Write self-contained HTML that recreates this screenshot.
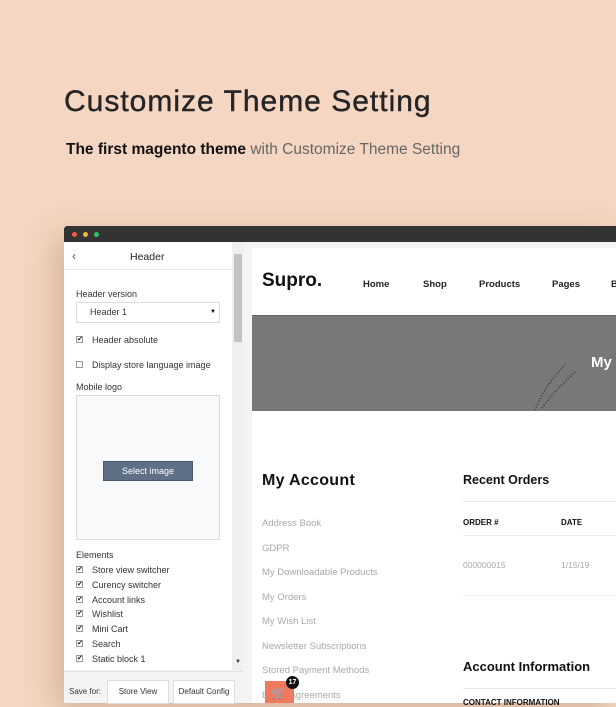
<!DOCTYPE html>
<html><head><meta charset="utf-8"><style>
*{margin:0;padding:0;box-sizing:border-box}
body{width:616px;height:703px;overflow:hidden;background:#f5d6c2;font-family:"Liberation Sans",sans-serif;position:relative}
.a{position:absolute;white-space:nowrap}
.sb{font-size:9px;color:#333}
.cb{position:absolute;width:7px;height:7px;border:1px solid #999;background:#fff;font-size:7px;line-height:5px;text-align:center;color:#222}
.lk{font-size:9.5px;color:#a9a9a9;left:262px}
</style></head><body>
<div class="a" style="left:64px;top:85px;font-size:30px;color:#252525;letter-spacing:1px;-webkit-text-stroke:0.4px #252525">Customize Theme Setting</div>
<div class="a" style="left:66px;top:141px;font-size:15.5px;color:#111"><b>The first magento theme</b> <span style="color:#666">with Customize Theme Setting</span></div>

<div class="a" style="left:64px;top:226px;width:552px;height:477px;background:#f4f4f4;box-shadow:-8px 10px 30px rgba(120,70,40,.25)"></div>
<div class="a" style="left:64px;top:226px;width:552px;height:16px;background:#333;border-radius:3px 0 0 0"></div>
<div class="a" style="left:72px;top:232px;width:5px;height:5px;border-radius:50%;background:#f05a4a"></div>
<div class="a" style="left:83px;top:232px;width:5px;height:5px;border-radius:50%;background:#f5b72e"></div>
<div class="a" style="left:94px;top:232px;width:5px;height:5px;border-radius:50%;background:#2cc36b"></div>

<div class="a" style="left:64px;top:242px;width:168px;height:428px;background:#fff"></div>
<div class="a" style="left:64px;top:242px;width:168px;height:28px;border-bottom:1px solid #e5e5e5"></div>
<div class="a sb" style="left:72px;top:249px;font-size:12px;color:#555">‹</div>
<div class="a" style="left:130px;top:251px;font-size:10.5px;color:#222">Header</div>
<div class="a" style="left:232px;top:242px;width:11px;height:428px;background:#f0f0f0"></div>
<div class="a" style="left:234px;top:254px;width:8px;height:88px;background:#c4c4c4"></div>
<div class="a" style="left:235px;top:659px;font-size:6px;color:#333">▼</div>
<div class="a sb" style="left:76px;top:289px">Header version</div>
<div class="a" style="left:76px;top:302px;width:144px;height:21px;border:1px solid #ddd;background:#fff"></div>
<div class="a sb" style="left:90px;top:307px">Header 1</div>
<div class="a" style="left:210px;top:309px;font-size:6px">▼</div>
<div class="cb" style="left:76px;top:336px">✔</div><div class="a sb" style="left:92px;top:335px">Header absolute</div>
<div class="cb" style="left:76px;top:361px"></div><div class="a sb" style="left:92px;top:360px">Display store language image</div>
<div class="a sb" style="left:76px;top:382px">Mobile logo</div>
<div class="a" style="left:76px;top:395px;width:144px;height:145px;border:1px solid #ddd;background:#f8f9fb"></div>
<div class="a" style="left:103px;top:461px;width:90px;height:20px;background:#5f7086;border:1px solid #4a5a6e;color:#fff;font-size:9px;text-align:center;line-height:18px">Select image</div>
<div class="a sb" style="left:76px;top:550px">Elements</div>
<div class="cb" style="left:76px;top:566px">✔</div><div class="a sb" style="left:92px;top:565px">Store view switcher</div>
<div class="cb" style="left:76px;top:581px">✔</div><div class="a sb" style="left:92px;top:580px">Curency switcher</div>
<div class="cb" style="left:76px;top:596px">✔</div><div class="a sb" style="left:92px;top:595px">Account links</div>
<div class="cb" style="left:76px;top:610px">✔</div><div class="a sb" style="left:92px;top:609px">Wishlist</div>
<div class="cb" style="left:76px;top:625px">✔</div><div class="a sb" style="left:92px;top:624px">Mini Cart</div>
<div class="cb" style="left:76px;top:640px">✔</div><div class="a sb" style="left:92px;top:639px">Search</div>
<div class="cb" style="left:76px;top:655px">✔</div><div class="a sb" style="left:92px;top:654px">Static block 1</div>
<div class="a" style="left:64px;top:671px;width:179px;height:32px;background:#f4f4f4;border-top:1px solid #e0e0e0"></div>
<div class="a" style="left:69px;top:687px;font-size:8px;color:#333">Save for:</div>
<div class="a" style="left:107px;top:680px;width:62px;height:24px;border:1px solid #ddd;background:#fff;font-size:8px;color:#333;text-align:center;line-height:22px">Store View</div>
<div class="a" style="left:173px;top:680px;width:62px;height:24px;border:1px solid #ddd;background:#fff;font-size:8px;color:#333;text-align:center;line-height:22px">Default Config</div>

<div class="a" style="left:252px;top:248px;width:364px;height:455px;background:#fff"></div>
<div class="a" style="left:262px;top:270px;font-size:19px;font-weight:bold;color:#111">Supro.</div>
<div class="a" style="left:363px;top:279px;font-size:9.5px;font-weight:bold;color:#222">Home</div>
<div class="a" style="left:423px;top:279px;font-size:9.5px;font-weight:bold;color:#222">Shop</div>
<div class="a" style="left:479px;top:279px;font-size:9.5px;font-weight:bold;color:#222">Products</div>
<div class="a" style="left:552px;top:279px;font-size:9.5px;font-weight:bold;color:#222">Pages</div>
<div class="a" style="left:611px;top:279px;font-size:9.5px;font-weight:bold;color:#222">B</div>
<div class="a" style="left:252px;top:315px;width:364px;height:96px;background:#787878;border-top:1px solid #666"></div>
<div class="a" style="left:591px;top:354px;font-size:15px;font-weight:bold;color:#fff">My</div>
<svg class="a" style="left:530px;top:360px" width="50" height="52"><path d="M5 50 Q15 25 35 5 M12 48 Q25 30 45 12" stroke="#444" stroke-width="2" stroke-dasharray="1 2" fill="none"/></svg>

<div class="a" style="left:262px;top:472px;font-size:16px;font-weight:bold;color:#111;letter-spacing:.3px">My Account</div>
<div class="a lk" style="top:518px">Address Book</div>
<div class="a lk" style="top:543px">GDPR</div>
<div class="a lk" style="top:567px">My Downloadable Products</div>
<div class="a lk" style="top:592px">My Orders</div>
<div class="a lk" style="top:616px">My Wish List</div>
<div class="a lk" style="top:641px">Newsletter Subscriptions</div>
<div class="a lk" style="top:665px">Stored Payment Methods</div>
<div class="a lk" style="top:690px">Billing Agreements</div>
<div class="a" style="left:265px;top:681px;width:29px;height:22px;background:#f07a60"></div>
<div class="a" style="left:271px;top:686px;color:#fff;font-size:12px">🛒</div>
<div class="a" style="left:286px;top:676px;width:13px;height:13px;border-radius:50%;background:#111;color:#fff;font-size:7px;font-weight:bold;text-align:center;line-height:13px">17</div>

<div class="a" style="left:463px;top:473px;font-size:12.5px;font-weight:bold;color:#111">Recent Orders</div>
<div class="a" style="left:463px;top:501px;width:153px;height:1px;background:#e5e5e5"></div>
<div class="a" style="left:463px;top:518px;font-size:8px;font-weight:bold;color:#111">ORDER #</div>
<div class="a" style="left:561px;top:518px;font-size:8px;font-weight:bold;color:#111">DATE</div>
<div class="a" style="left:463px;top:535px;width:153px;height:1px;background:#eee"></div>
<div class="a" style="left:463px;top:560px;font-size:8.5px;color:#aaa">000000015</div>
<div class="a" style="left:561px;top:560px;font-size:8.5px;color:#aaa">1/15/19</div>
<div class="a" style="left:463px;top:595px;width:153px;height:1px;background:#eee"></div>
<div class="a" style="left:463px;top:659px;font-size:13px;font-weight:bold;color:#111">Account Information</div>
<div class="a" style="left:463px;top:688px;width:153px;height:1px;background:#e5e5e5"></div>
<div class="a" style="left:463px;top:698px;font-size:8px;font-weight:bold;color:#111">CONTACT INFORMATION</div>
</body></html>
